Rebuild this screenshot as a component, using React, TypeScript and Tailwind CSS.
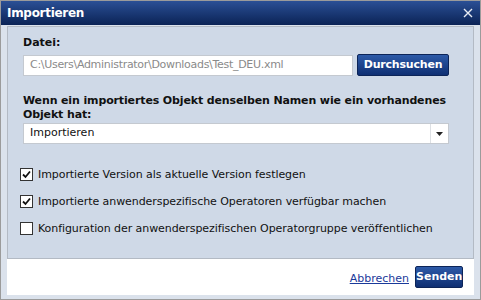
import React from 'react';

const font = { fontFamily: '"DejaVu Sans", Verdana, sans-serif' };

const Check = ({ checked }: { checked: boolean }) => (
  <span className="w-[13px] h-[13px] border border-[#333333] bg-white flex items-center justify-center shrink-0">
    {checked && (
      <svg width="9" height="9" viewBox="0 0 9 9">
        <path d="M1 4.5 L3.5 7 L8 1.5" fill="none" stroke="#111" strokeWidth="1.8" />
      </svg>
    )}
  </span>
);

const options = [
  { label: 'Importierte Version als aktuelle Version festlegen', checked: true },
  { label: 'Importierte anwenderspezifische Operatoren verfügbar machen', checked: true },
  { label: 'Konfiguration der anwenderspezifischen Operatorgruppe veröffentlichen', checked: false },
];

export default function App() {
  return (
    <div className="w-[481px] h-[300px] flex flex-col bg-[#dbe2ec] border border-[#9b9b9b] text-[#111]" style={font}>
      {/* Title */}
      <div className="h-[24px] shrink-0 flex items-center justify-between pl-[6px] pr-[7px] bg-gradient-to-b from-[#2b5096] to-[#0b2356] text-white">
        <span className="text-[12px] font-bold tracking-[-0.3px]">Importieren</span>
        <svg width="10" height="10" viewBox="0 0 10 10">
          <path d="M1 1 L9 9 M9 1 L1 9" stroke="#e8ecf4" strokeWidth="1.4" />
        </svg>
      </div>

      <div className="flex-1 flex flex-col px-[6px] pt-[1px] pb-[4px]">
        {/* Content panel */}
        <div className="flex-1 bg-[#cfd9e7] border border-[#b3bac4] px-[15px] pt-[9px]">
          <div className="text-[11px] font-bold leading-[14px]">Datei:</div>
          <div className="flex items-center gap-[4px] mt-[4px]">
            <div className="w-[330px] h-[21px] bg-white border border-[#c4c9d0] flex items-center px-[6px] text-[11px] text-[#8a8a8a] tracking-[-0.3px]">
              C:\Users\Administrator\Downloads\Test_DEU.xml
            </div>
            <button className="h-[22px] w-[92px] rounded-[2px] border border-[#0c2458] bg-gradient-to-b from-[#2d5aa8] to-[#0f2f73] text-white text-[11px] font-bold tracking-[-0.2px]">
              Durchsuchen
            </button>
          </div>

          <div className="mt-[18px] text-[11px] font-bold leading-[14px] tracking-[-0.13px]">
            Wenn ein importiertes Objekt denselben Namen wie ein vorhandenes Objekt hat:
          </div>
          <div className="mt-[1px] w-[426px] h-[21px] bg-white border border-[#c4c9d0] flex items-center">
            <span className="flex-1 px-[6px] text-[11px]">Importieren</span>
            <span className="w-[18px] h-full border-l border-[#dde0e4] flex items-center justify-center">
              <svg width="7" height="4" viewBox="0 0 7 4">
                <path d="M0 0 H7 L3.5 4 Z" fill="#222" />
              </svg>
            </span>
          </div>

          <div className="mt-[24px] -ml-[3px] flex flex-col gap-[14px]">
            {options.map((o) => (
              <label key={o.label} className="flex items-center gap-[5px] text-[11px] leading-[13px] tracking-[-0.07px]">
                <Check checked={o.checked} />
                <span>{o.label}</span>
              </label>
            ))}
          </div>
        </div>

        {/* Footer */}
        <div className="h-[36px] shrink-0 bg-white flex items-center justify-end gap-[6px] pr-[11px]">
          <a className="text-[11px] text-[#1a3a9a] underline mt-[4px]">Abbrechen</a>
          <button className="h-[22px] w-[48px] rounded-[2px] border border-[#0c2458] bg-gradient-to-b from-[#2d5aa8] to-[#0f2f73] text-white text-[11px] font-bold">
            Senden
          </button>
        </div>
      </div>
    </div>
  );
}
